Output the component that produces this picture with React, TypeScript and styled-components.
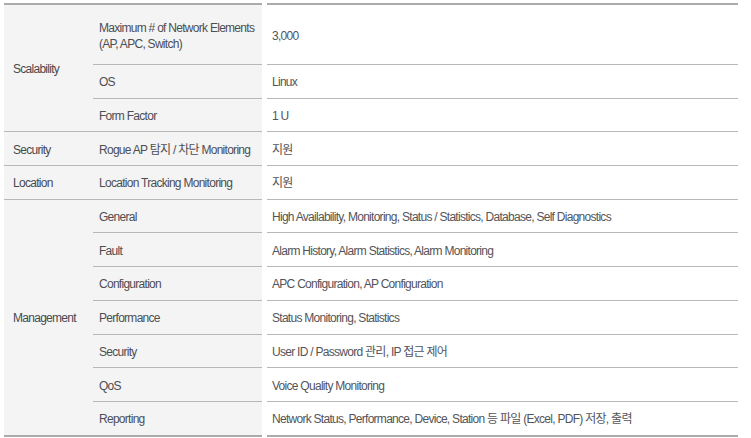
import React from 'react'
import styled, { createGlobalStyle } from 'styled-components'

const GlobalStyle = createGlobalStyle`
    body {
        margin: 0;
        background: #ffffff;
        font-family: 'Liberation Sans', 'Noto Sans CJK KR', sans-serif;
    }
`

type Spec = { item: string; value: string }
type Group = { name: string; specs: Spec[] }

const groups: Group[] = [
    {
        name: 'Scalability',
        specs: [
            { item: 'Maximum # of Network Elements\n(AP, APC, Switch)', value: '3,000' },
            { item: 'OS', value: 'Linux' },
            { item: 'Form Factor', value: '1 U' },
        ],
    },
    { name: 'Security', specs: [{ item: 'Rogue AP 탐지 / 차단 Monitoring', value: '지원' }] },
    { name: 'Location', specs: [{ item: 'Location Tracking Monitoring', value: '지원' }] },
    {
        name: 'Management',
        specs: [
            { item: 'General', value: 'High Availability, Monitoring, Status / Statistics, Database, Self Diagnostics' },
            { item: 'Fault', value: 'Alarm History, Alarm Statistics, Alarm Monitoring' },
            { item: 'Configuration', value: 'APC Configuration, AP Configuration' },
            { item: 'Performance', value: 'Status Monitoring, Statistics' },
            { item: 'Security', value: 'User ID / Password 관리, IP 접근 제어' },
            { item: 'QoS', value: 'Voice Quality Monitoring' },
            { item: 'Reporting', value: 'Network Status, Performance, Device, Station 등 파일 (Excel, PDF) 저장, 출력' },
        ],
    },
]

const Page = styled.div`
    padding: 3px 13px 0 4px;
`

const SpecGrid = styled.div`
    display: grid;
    grid-template-columns: 89px 169px 476px;
    grid-template-rows: 62px repeat(10, 33.7px) 35px;
`

type CellProps = { $top?: boolean; $bottom?: boolean }

const Cell = styled.div<CellProps>`
    display: flex;
    align-items: center;
    box-sizing: border-box;
    border-top: ${(p) => (p.$top ? '2px solid #a9abad' : 'none')};
    border-bottom: ${(p) => (p.$bottom ? '2px solid #a9abad' : '1px solid #b7b8b9')};
    padding-top: 2px;
    font-size: 12px;
    line-height: 16px;
    letter-spacing: -0.72px;
    white-space: pre-line;
`

const GroupCell = styled(Cell)<{ $span: number }>`
    grid-column: 1;
    grid-row: span ${(p) => p.$span};
    background: #f3f4f3;
    padding-left: 9px;
    color: #48494f;
`

const ItemCell = styled(Cell)`
    grid-column: 2;
    background: #f3f4f3;
    padding-left: 6px;
    color: #4d4e54;
`

const ValueCell = styled(Cell)`
    grid-column: 3;
    margin-left: 5px;
    padding-left: 5px;
    color: #535459;
`

const App = () => {
    return (
        <Page>
            <GlobalStyle />
            <SpecGrid>
                {groups.map((g, gi) => {
                    const lastGroup = gi === groups.length - 1
                    return (
                        <React.Fragment key={g.name}>
                            <GroupCell $span={g.specs.length} $top={gi === 0} $bottom={lastGroup}>
                                {g.name}
                            </GroupCell>
                            {g.specs.map((s, si) => {
                                const top = gi === 0 && si === 0
                                const bottom = lastGroup && si === g.specs.length - 1
                                return (
                                    <React.Fragment key={s.item}>
                                        <ItemCell $top={top} $bottom={bottom}>{s.item}</ItemCell>
                                        <ValueCell $top={top} $bottom={bottom}>{s.value}</ValueCell>
                                    </React.Fragment>
                                )
                            })}
                        </React.Fragment>
                    )
                })}
            </SpecGrid>
        </Page>
    )
}

export default App
